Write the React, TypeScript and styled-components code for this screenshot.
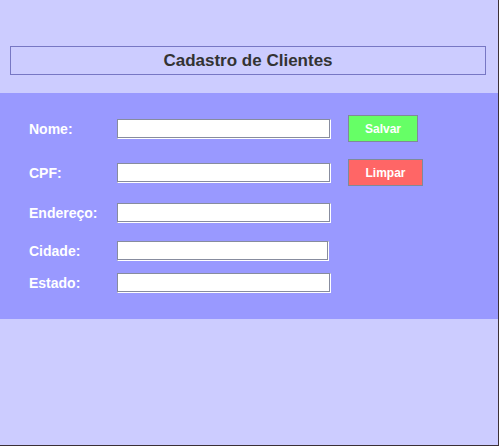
import React from 'react';
import styled, { createGlobalStyle } from 'styled-components';

const GlobalStyle = createGlobalStyle`
  html,
  body {
    margin: 0;
    padding: 0;
    background-color: #3b3036;
  }
`;

const Window = styled.div`
  width: 498px;
  height: 445px;
  background-color: #ccccff;
  font-family: 'Liberation Sans', Arial, sans-serif;
  padding-top: 46px;
  box-sizing: border-box;
`;

const TitleBox = styled.div`
  width: 476px;
  height: 29px;
  margin-left: 10px;
  box-sizing: border-box;
  border: 1px solid #7777c4;
  display: flex;
  align-items: center;
  justify-content: center;
`;

const Title = styled.h1`
  margin: 0;
  font-size: 17px;
  font-weight: bold;
  color: #333333;
`;

const Band = styled.div`
  margin-top: 18px;
  height: 226px;
  box-sizing: border-box;
  background-color: #9999ff;
  padding: 22px 0 0 29px;
  display: flex;
  flex-direction: column;
`;

const Row = styled.div<{ $gap: number; $height: number }>`
  display: grid;
  grid-template-columns: 88px 214px auto;
  align-items: center;
  height: ${({ $height }) => $height}px;
  margin-top: ${({ $gap }) => $gap}px;
`;

const Label = styled.label`
  color: #ffffff;
  font-size: 14px;
  font-weight: bold;
`;

const Input = styled.input<{ $width?: number }>`
  width: ${({ $width }) => $width ?? 214}px;
  height: 20px;
  box-sizing: border-box;
  padding: 0 3px;
  background: #ffffff;
  border-style: solid;
  border-width: 1px;
  border-color: #878c9e #ffffff #ffffff #878c9e;
  box-shadow: inset -1px -1px 0 #878c9e;
  font-family: 'Liberation Sans', Arial, sans-serif;
  font-size: 12px;
  outline: none;
`;

const Button = styled.button<{ $color: string; $width: number }>`
  margin-left: 17px;
  width: ${({ $width }) => $width}px;
  height: 27px;
  box-sizing: border-box;
  background-color: ${({ $color }) => $color};
  border: 1px solid #7f8a99;
  color: #ffffff;
  font-family: 'Liberation Sans', Arial, sans-serif;
  font-size: 12px;
  font-weight: bold;
  padding: 0;
  cursor: pointer;
`;

export default function App() {
  return (
    <>
      <GlobalStyle />
      <Window>
        <TitleBox>
          <Title>Cadastro de Clientes</Title>
        </TitleBox>
        <Band>
          <Row $gap={0} $height={27}>
            <Label>Nome:</Label>
            <Input />
            <Button $color="#66ff66" $width={70}>Salvar</Button>
          </Row>
          <Row $gap={17} $height={27}>
            <Label>CPF:</Label>
            <Input />
            <Button $color="#ff6666" $width={75}>Limpar</Button>
          </Row>
          <Row $gap={17} $height={20}>
            <Label>Endereço:</Label>
            <Input />
          </Row>
          <Row $gap={18} $height={20}>
            <Label>Cidade:</Label>
            <Input $width={212} />
          </Row>
          <Row $gap={12} $height={20}>
            <Label>Estado:</Label>
            <Input />
          </Row>
        </Band>
      </Window>
    </>
  );
}
